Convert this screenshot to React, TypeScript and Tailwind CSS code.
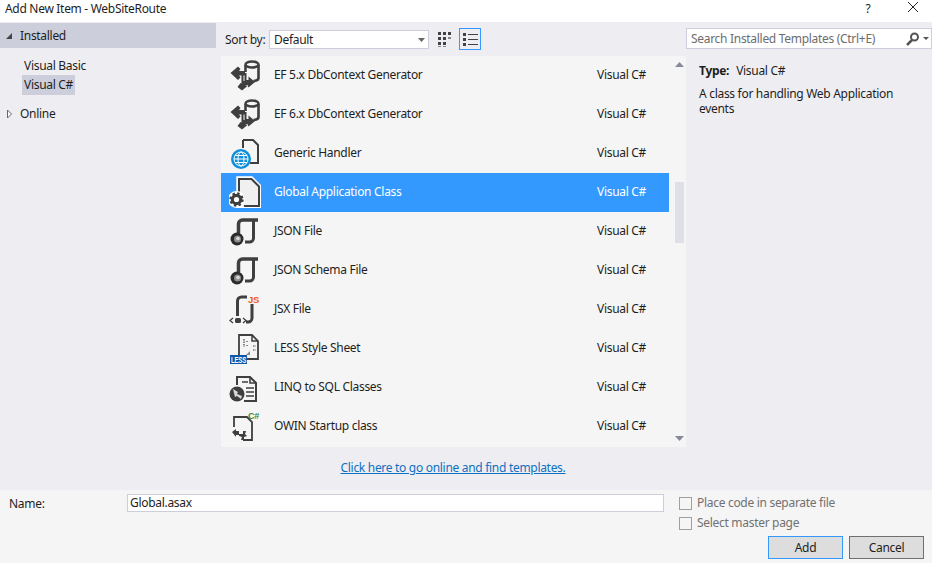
const DARK = '#3f3f3f';

const EfIcon = () => (
    <svg width="32" height="32" viewBox="0 0 32 32">
        <ellipse cx="23" cy="5.500" rx="6.500" ry="3" fill="#f5f5f5" stroke={DARK} strokeWidth="2.500" />
        <path d="M16.500 6v7M29.500 6v13a6.500 3 0 0 1-5 3" fill="none" stroke={DARK} strokeWidth="2.600" />
        <path d="M1.500 14l7.500-6.500 2.500 2.500-1.500 2h6v4.500h-6l1.500 2L9 21z" fill={DARK} />
        <path d="M12.500 14h5v7h2v-3.500l6.500 5.500-6.500 5.500-1-2.500h-6z" fill={DARK} />
        <path d="M11.500 24l7 3-5.500 4.500-4.500-3.500z" fill={DARK} />
        <path d="M15 16.500v5.500" stroke="#f5f5f5" strokeWidth="1" />
    </svg>
);

const WebIcon = () => (
    <svg width="32" height="32" viewBox="0 0 32 32">
        <path d="M14 3h10l5 5v18H21" fill="none" stroke={DARK} strokeWidth="2" />
        <path d="M14 3v8" fill="none" stroke={DARK} strokeWidth="2" />
        <circle cx="12" cy="22" r="10" fill="#0f8fdc" />
        <g fill="none" stroke="#fff" strokeWidth="1">
            <circle cx="12" cy="22" r="7" />
            <ellipse cx="12" cy="22" rx="3" ry="7" />
            <path d="M5 22h14M6 18.500h12M6 25.500h12" />
        </g>
    </svg>
);

const GearFileIcon = () => (
    <svg width="32" height="32" viewBox="0 0 32 32">
        <path d="M8 1h15l8.500 8.500V31.500H8z" fill="#f0f0f0" stroke="#fff" strokeWidth="1.500" />
        <path d="M10 16V3h12.500l7.500 7.500V30H15" fill="#f0f0f0" stroke={DARK} strokeWidth="2" />
        <circle cx="7.500" cy="23.500" r="8.500" fill="#fff" />
        <circle cx="7.500" cy="23.500" r="4.200" fill="none" stroke={DARK} strokeWidth="3.200" />
        <circle cx="7.500" cy="23.500" r="6" fill="none" stroke={DARK} strokeWidth="2.400" strokeDasharray="2.400 2.310" />
    </svg>
);

const Sphere = () => (
    <>
        <circle cx="8" cy="24" r="6.500" fill="#2b2b2b" />
        <circle cx="8.500" cy="24" r="3.500" fill="#8e8e8e" />
        <circle cx="9" cy="23.500" r="1.800" fill="#d8d8d8" />
    </>
);

const JsonIcon = () => (
    <svg width="32" height="32" viewBox="0 0 32 32">
        <path d="M9.500 18V9a4 4 0 0 1 4-4H29" fill="none" stroke={DARK} strokeWidth="3.500" />
        <path d="M24.500 6v17a4 4 0 0 1-4 4H16" fill="none" stroke={DARK} strokeWidth="3" />
        <Sphere />
    </svg>
);

const JsxIcon = () => (
    <svg width="32" height="32" viewBox="0 0 32 32">
        <path d="M8.500 23V8a4 4 0 0 1 4-4H18" fill="none" stroke={DARK} strokeWidth="3" />
        <path d="M23 11v14a4 4 0 0 1-4 4h-2" fill="none" stroke={DARK} strokeWidth="3" />
        <path d="M4 25l-3 2.500L4 30M14 25l3 2.500L14 30" fill="none" stroke={DARK} strokeWidth="1.300" />
        <rect x="6" y="25" width="6" height="5" rx="1.500" fill={DARK} />
        <text x="19" y="10" fontSize="9.500" fontWeight="700" fill="#f05a22" fontFamily="'Liberation Sans', sans-serif">JS</text>
    </svg>
);

const LessIcon = () => (
    <svg width="32" height="32" viewBox="0 0 32 32">
        <path d="M10 23V3h13l6 6v18H18" fill="none" stroke={DARK} strokeWidth="1.800" />
        <path d="M23 3v6h6" fill="none" stroke={DARK} strokeWidth="1.500" />
        <path d="M15 7v8M18 9v1M18 13v1M24 14h3M24 18h3" stroke={DARK} strokeWidth="1.200" strokeDasharray="1.500 1" />
        <path d="M21 19l-4 4h4z" fill="#8a8a8a" />
        <rect x="1" y="23" width="17" height="9" fill="#0b57a8" />
        <text x="2" y="31" fontSize="8.500" fontWeight="700" fill="#fff" fontFamily="'Liberation Sans', sans-serif" textLength="15" lengthAdjust="spacingAndGlyphs">LESS</text>
    </svg>
);

const LinqIcon = () => (
    <svg width="32" height="32" viewBox="0 0 32 32">
        <path d="M8 14V6h13l6 6v18H15" fill="none" stroke={DARK} strokeWidth="2" />
        <path d="M21 6v6h6M13 11h6M17 17h8M17 21h8M17 25h8" fill="none" stroke={DARK} strokeWidth="1.600" />
        <circle cx="8" cy="23" r="7.500" fill={DARK} />
        <path d="M4 18l5 3-1 2 5 2-1 3-4-3-2 1z" fill="#d8d8d8" />
    </svg>
);

const OwinIcon = () => (
    <svg width="32" height="32" viewBox="0 0 32 32">
        <path d="M5 17V7h13l5 5v18H14" fill="none" stroke={DARK} strokeWidth="1.800" />
        <path d="M3 22l4-3v2h3v4H7v2zM10 24h4v-3h3l-1 3 2 2-3 1v3h-3l1-3-3-1z" fill={DARK} />
        <text x="19" y="9" fontSize="9" fontWeight="700" fill="#388a34" fontFamily="'Liberation Sans', sans-serif">C#</text>
    </svg>
);

const items = [
    { name: 'EF 5.x DbContext Generator', icon: <EfIcon /> },
    { name: 'EF 6.x DbContext Generator', icon: <EfIcon /> },
    { name: 'Generic Handler', icon: <WebIcon /> },
    { name: 'Global Application Class', icon: <GearFileIcon />, selected: true },
    { name: 'JSON File', icon: <JsonIcon /> },
    { name: 'JSON Schema File', icon: <JsonIcon /> },
    { name: 'JSX File', icon: <JsxIcon /> },
    { name: 'LESS Style Sheet', icon: <LessIcon /> },
    { name: 'LINQ to SQL Classes', icon: <LinqIcon /> },
    { name: 'OWIN Startup class', icon: <OwinIcon /> },
];

export default function App() {
    return (
        <div className="w-[932px] h-[563px] overflow-hidden flex flex-col bg-white text-[12px] text-[#1e1e1e] font-['Noto_Sans',sans-serif] tracking-[-0.3px]">
            {/* Title bar */}
            <div className="h-[22px] shrink-0 flex items-start pl-[5px]">
                <span className="flex-1 text-[12px] leading-[17px]">Add New Item - WebSiteRoute</span>
                <span className="w-[12px] text-center text-[12px] leading-[17px] mr-[33px]">?</span>
                <svg width="12" height="12" viewBox="0 0 12 12" className="mr-[13px] mt-px">
                    <path d="M1 1l10 10M11 1L1 11" stroke="#222" strokeWidth="1" />
                </svg>
            </div>

            {/* Main area */}
            <div className="flex-1 flex bg-[#eeeef2]">
                {/* Left tree */}
                <div className="w-[216px] shrink-0 pt-px">
                    <div className="h-[25px] bg-[#ccceDB] flex items-center">
                        <svg width="8" height="8" viewBox="0 0 8 8" className="ml-[5px] mr-[7px]">
                            <path d="M7 1v6H1z" fill="#444" />
                        </svg>
                        <span>Installed</span>
                    </div>
                    <div className="pt-[8px] pl-[22px] flex flex-col items-start">
                        <div className="h-[19px] flex items-center px-[2px]">Visual Basic</div>
                        <div className="h-[20px] flex items-center px-[2px] bg-[#ccceDB]">Visual C#</div>
                    </div>
                    <div className="h-[25px] mt-[6px] flex items-center">
                        <svg width="8" height="10" viewBox="0 0 8 10" className="ml-[6px] mr-[6px]">
                            <path d="M1.500 1l4 4-4 4z" fill="#fff" stroke="#666" />
                        </svg>
                        <span>Online</span>
                    </div>
                </div>

                {/* Center */}
                <div className="w-[470px] shrink-0 flex flex-col">
                    <div className="h-[34px] flex items-center shrink-0 pt-[1px]">
                        <span className="ml-[9px] w-[44px]">Sort by:</span>
                        <div className="w-[160px] h-[19px] bg-white border border-[#ccceDB] flex items-center pl-[4px] pr-[3px]">
                            <span className="flex-1">Default</span>
                            <svg width="7" height="4" viewBox="0 0 7 4"><path d="M0 0h7L3.500 4z" fill="#666" /></svg>
                        </div>
                        <svg width="15" height="15" viewBox="0 0 15 15" className="ml-[9px] -mt-[1px]">
                            <path d="M0 0h3v3H0zM5 0h3v3H5zM10 0h3v3h-3zM0 5h3v3H0zM5 5h3v3H5zM0 10h3v3H0zM5 10h3v3H5z" fill="#424242" />
                            <path d="M10 5h3v2h-3zM0 14h3v1H0zM5 14h3v1H5z" fill="#888" />
                        </svg>
                        <div className="w-[22px] h-[22px] ml-[6px] -mt-[1px] border border-[#3399ff] flex items-center justify-center">
                            <svg width="15" height="13" viewBox="0 0 15 13">
                                <path d="M0 0h3v3H0zM0 5h3v3H0zM0 10h3v3H0zM5 1h10v1H5zM5 6h10v1H5zM5 11h10v1H5z" fill="#424242" />
                            </svg>
                        </div>
                    </div>
                    <div className="ml-[5px] w-[465px] h-[391px] bg-[#f5f5f5] flex">
                        <div className="w-[448px]">
                            {items.map((item) => (
                                <div
                                    key={item.name}
                                    className={`h-[39px] flex items-center pb-[2px] ${item.selected ? 'bg-[#3399ff] text-white' : ''}`}
                                >
                                    <div className="w-[53px] pl-[8px] shrink-0 flex items-center">{item.icon}</div>
                                    <span className="flex-1">{item.name}</span>
                                    <span className="w-[72px]">Visual C#</span>
                                </div>
                            ))}
                        </div>
                        <div className="flex-1 flex flex-col items-center pr-[1px]">
                            <svg width="9" height="5" viewBox="0 0 9 5" className="mt-[6px] ml-[4px]"><path d="M0 5h9L4.500 0z" fill="#868999" /></svg>
                            <div className="w-[9px] h-[61px] mt-[115px] bg-[#dedfe7] ml-[4px]" />
                            <svg width="9" height="5" viewBox="0 0 9 5" className="mt-auto mb-[6px] ml-[4px]"><path d="M0 0h9L4.500 5z" fill="#868999" /></svg>
                        </div>
                    </div>
                    <div className="flex-1 flex items-center justify-center pb-[1px] pl-[4px]">
                        <a className="text-[#0e70c0] underline">Click here to go online and find templates.</a>
                    </div>
                </div>

                {/* Right details */}
                <div className="flex-1 flex flex-col">
                    <div className="h-[34px] flex items-start pt-[6px]">
                        <div className="w-[246px] h-[21px] bg-white border border-[#ccceDB] flex items-center pl-[4px] pr-[2px] text-[#6d6d6d]">
                            <span className="flex-1">Search Installed Templates (Ctrl+E)</span>
                            <svg width="14" height="14" viewBox="0 0 14 14">
                                <circle cx="8.500" cy="5" r="3.500" fill="none" stroke="#555" strokeWidth="2" />
                                <path d="M6 8l-5 5" stroke="#555" strokeWidth="2.500" />
                            </svg>
                            <svg width="6" height="3" viewBox="0 0 6 3" className="ml-[3px]"><path d="M0 0h6L3 3z" fill="#555" /></svg>
                        </div>
                    </div>
                    <div className="pl-[13px] pr-[30px] pt-[6px]">
                        <div className="flex gap-[7px] h-[18px] items-center">
                            <span className="font-bold">Type:</span>
                            <span>Visual C#</span>
                        </div>
                        <p className="mt-[6px] leading-[15px]">A class for handling Web Application events</p>
                    </div>
                </div>
            </div>

            {/* Footer */}
            <div className="h-[73px] shrink-0 bg-[#f5f5f5] flex pt-[4px]">
                <span className="w-[127px] pl-[9px] pt-[1px] shrink-0">Name:</span>
                <div className="w-[537px] h-[18px] shrink-0 bg-white border border-[#ccceDB] flex items-center pl-[2px]">Global.asax</div>
                <div className="ml-[15px] flex-1 flex flex-col">
                    <div className="flex items-center gap-[5px] h-[14px] mt-[2px] text-[#717171]">
                        <span className="w-[13px] h-[13px] border border-[#a0a0a0] bg-[#f5f5f5]" />
                        Place code in separate file
                    </div>
                    <div className="flex items-center gap-[5px] h-[14px] mt-[6px] text-[#717171]">
                        <span className="w-[13px] h-[13px] border border-[#a0a0a0] bg-[#f5f5f5]" />
                        Select master page
                    </div>
                    <div className="flex mt-[6px] ml-[89px] gap-[6px]">
                        <button className="w-[75px] h-[23px] bg-[#dddddd] border border-[#3399ff]">Add</button>
                        <button className="w-[75px] h-[23px] bg-[#dddddd] border border-[#707070]">Cancel</button>
                    </div>
                </div>
            </div>
        </div>
    );
}
